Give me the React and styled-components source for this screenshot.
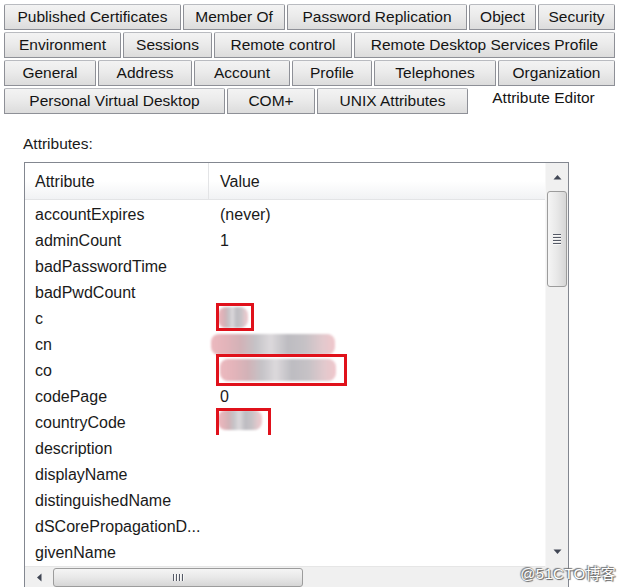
import React from 'react'
import styled, { createGlobalStyle } from 'styled-components'

// **** Styled Components : Start
const GlobalStyle = createGlobalStyle`
  html, body {
    margin: 0;
    padding: 0;
    background: #ffffff;
  }
  body {
    font-family: "Liberation Sans", Arial, sans-serif;
    color: #1a1a1a;
  }
`

const Page = styled.div`
  position: relative;
  width: 625px;
  height: 587px;
  overflow: hidden;
  background: #ffffff;
`

const TabStrip = styled.div`
  display: flex;
  flex-direction: column;
  gap: 2px;
  padding: 4px 0 0 4px;
`

const TabRow = styled.div`
  display: flex;
  gap: 2px;
  height: 26px;
  align-items: flex-end;
`

const Tab = styled.div`
  box-sizing: border-box;
  width: ${p => p.w}px;
  height: ${p => (p.selected ? 30 : 26)}px;
  margin-bottom: ${p => (p.selected ? -2 : 0)}px;
  display: flex;
  align-items: center;
  justify-content: center;
  padding-bottom: ${p => (p.selected ? 6 : 0)}px;
  font-size: 15.5px;
  white-space: nowrap;
  color: #141414;
  border: 1px solid ${p => (p.selected ? '#ffffff' : '#8e9097')};
  border-top-color: ${p => (p.selected ? '#ffffff' : '#b9bbc0')};
  border-radius: 2px 2px 0 0;
  background: ${p => (p.selected
    ? '#ffffff'
    : 'linear-gradient(#f3f3f3 0%, #ebebeb 45%, #dcdcdc 100%)')};
  position: relative;
  z-index: ${p => (p.selected ? 2 : 1)};
`

const Panel = styled.div`
  padding: 21px 0 0 23px;
`

const Label = styled.div`
  font-size: 15.5px;
  line-height: 18px;
  margin-bottom: 9px;
`

const ListBox = styled.div`
  box-sizing: border-box;
  width: 545px;
  height: 426px;
  margin-left: 1px;
  border: 1px solid #838790;
  display: grid;
  grid-template-columns: 1fr 23px;
  grid-template-rows: 1fr 21px;
  background: #ffffff;
`

const ListMain = styled.div`
  overflow: hidden;
`

const Header = styled.div`
  display: grid;
  grid-template-columns: 184px 1fr;
  height: 36px;
  border-bottom: 1px solid #e3e4e6;
  background: linear-gradient(#ffffff 0%, #ffffff 50%, #f1f2f4 100%);
`

const HeaderCell = styled.div`
  display: flex;
  align-items: center;
  padding-left: ${p => p.pad}px;
  padding-top: 2px;
  font-size: 16px;
  border-right: ${p => (p.divider ? '1px solid #e3e4e6' : 'none')};
`

const Rows = styled.div`
  padding-top: 2px;
`

const Row = styled.div`
  display: grid;
  grid-template-columns: 184px 1fr;
  height: 26px;
  font-size: 16px;
  line-height: 26px;
`

const NameCell = styled.div`
  padding-left: 10px;
  white-space: nowrap;
`

const ValueCell = styled.div`
  position: relative;
  padding-left: 11px;
  white-space: nowrap;
`

const Smudge = styled.div`
  position: absolute;
  left: ${p => p.x}px;
  top: ${p => p.y}px;
  width: ${p => p.w}px;
  height: ${p => p.h}px;
  border-radius: 8px;
  filter: blur(1px);
  background: linear-gradient(90deg,
    #ecb9bf 0%, #e3b4ba 12%, #d2b2b7 24%, #c5c3c7 36%, #dcd9dc 48%,
    #bdbcc1 62%, #c6c2c6 76%, #e2c9cd 90%, #f0c7cc 100%);
`

const RedFrame = styled.div`
  position: absolute;
  left: 7px;
  top: ${p => p.y}px;
  width: ${p => p.w}px;
  height: ${p => p.h}px;
  box-sizing: border-box;
  border: 3px solid #e0111b;
  border-bottom-width: ${p => (p.open ? 0 : 3)}px;
`

const VScroll = styled.div`
  position: relative;
  background: #f0f0f0;
  border-left: 1px solid #f7f7f7;
  display: flex;
  flex-direction: column;
  align-items: center;
`

const ArrowBox = styled.div`
  height: 28px;
  width: 100%;
  display: flex;
  align-items: center;
  justify-content: center;
`

const VThumb = styled.div`
  box-sizing: border-box;
  width: 20px;
  height: 96px;
  border: 1px solid #9c9c9c;
  border-radius: 3px;
  background: linear-gradient(90deg, #f5f5f5 0%, #e8e8e8 50%, #d6d6d6 100%);
  display: flex;
  flex-direction: column;
  align-items: center;
  justify-content: center;
  gap: 2px;
`

const Spacer = styled.div`
  flex: 1;
`

const GripH = styled.div`
  width: 8px;
  height: 1px;
  background: #555a66;
  box-shadow: 0 1px 0 #f8f8f8;
`

const HScroll = styled.div`
  background: #f0f0f0;
  border-top: 1px solid #e6e6e6;
  display: flex;
  align-items: center;
`

const HArrow = styled.div`
  width: 28px;
  height: 100%;
  display: flex;
  align-items: center;
  justify-content: center;
`

const HThumb = styled.div`
  box-sizing: border-box;
  width: 250px;
  height: 19px;
  border: 1px solid #9c9c9c;
  border-radius: 3px;
  background: linear-gradient(#f5f5f5 0%, #e8e8e8 50%, #d6d6d6 100%);
  display: flex;
  align-items: center;
  justify-content: center;
  gap: 2px;
`

const GripV = styled.div`
  width: 1px;
  height: 7px;
  background: #555a66;
  box-shadow: 1px 0 0 #f8f8f8;
`

const Corner = styled.div`
  background: #f0f0f0;
`

const Watermark = styled.div`
  position: absolute;
  right: 9px;
  bottom: 4px;
  font-family: "Liberation Sans", "Noto Sans CJK SC", sans-serif;
  font-size: 15px;
  color: #ffffff;
  text-shadow: 0 0 1px #555, 1px 1px 1px #666, -1px -1px 1px #777;
  letter-spacing: 0.3px;
`
// **** styled components : End

const tabRows = [
  [
    ['Published Certificates', 177],
    ['Member Of', 102],
    ['Password Replication', 180],
    ['Object', 67],
    ['Security', 77],
  ],
  [
    ['Environment', 117],
    ['Sessions', 89],
    ['Remote control', 138],
    ['Remote Desktop Services Profile', 261],
  ],
  [
    ['General', 92],
    ['Address', 94],
    ['Account', 96],
    ['Profile', 80],
    ['Telephones', 122],
    ['Organization', 117],
  ],
  [
    ['Personal Virtual Desktop', 221],
    ['COM+', 88],
    ['UNIX Attributes', 151],
    ['Attribute Editor', 147, true],
  ],
]

const attributes = [
  { name: 'accountExpires', value: '(never)' },
  { name: 'adminCount', value: '1' },
  { name: 'badPasswordTime' },
  { name: 'badPwdCount' },
  { name: 'c', smudge: { x: 9, y: 1, w: 30, h: 21 }, frame: { y: -3, w: 38, h: 28 } },
  { name: 'cn', smudge: { x: 2, y: 2, w: 124, h: 21 } },
  { name: 'co', smudge: { x: 11, y: 1, w: 116, h: 22 }, frame: { y: -4, w: 131, h: 32 } },
  { name: 'codePage', value: '0' },
  { name: 'countryCode', smudge: { x: 9, y: 0, w: 44, h: 20 }, frame: { y: -2, w: 55, h: 27, open: true } },
  { name: 'description' },
  { name: 'displayName' },
  { name: 'distinguishedName' },
  { name: 'dSCorePropagationD...' },
  { name: 'givenName' },
]

const UpArrow = () => (
  <svg width="9" height="6" viewBox="0 0 9 6">
    <path d="M0.5 5.5 L4.5 1 L8.5 5.5 Z" fill="#404654" />
  </svg>
)

const DownArrow = () => (
  <svg width="9" height="6" viewBox="0 0 9 6">
    <path d="M0.5 0.5 L4.5 5 L8.5 0.5 Z" fill="#404654" />
  </svg>
)

const LeftArrow = () => (
  <svg width="6" height="9" viewBox="0 0 6 9">
    <path d="M5.5 0.5 L1 4.5 L5.5 8.5 Z" fill="#404654" />
  </svg>
)

const App = () => {
  return (
    <>
      <GlobalStyle />
      <Page>
        <TabStrip>
          {tabRows.map((row, i) => (
            <TabRow key={i}>
              {row.map(([label, w, selected]) => (
                <Tab key={label} w={w} selected={selected}>{label}</Tab>
              ))}
            </TabRow>
          ))}
        </TabStrip>

        <Panel>
          <Label>Attributes:</Label>
          <ListBox>
            <ListMain>
              <Header>
                <HeaderCell pad={10} divider>Attribute</HeaderCell>
                <HeaderCell pad={11}>Value</HeaderCell>
              </Header>
              <Rows>
                {attributes.map(attr => (
                  <Row key={attr.name}>
                    <NameCell>{attr.name}</NameCell>
                    <ValueCell>
                      {attr.value}
                      {attr.smudge && <Smudge {...attr.smudge} />}
                      {attr.frame && <RedFrame {...attr.frame} />}
                    </ValueCell>
                  </Row>
                ))}
              </Rows>
            </ListMain>

            <VScroll>
              <ArrowBox><UpArrow /></ArrowBox>
              <VThumb>
                <GripH /><GripH /><GripH /><GripH />
              </VThumb>
              <Spacer />
              <ArrowBox><DownArrow /></ArrowBox>
            </VScroll>

            <HScroll>
              <HArrow><LeftArrow /></HArrow>
              <HThumb>
                <GripV /><GripV /><GripV /><GripV />
              </HThumb>
            </HScroll>
            <Corner />
          </ListBox>
        </Panel>

        <Watermark>@51CTO博客</Watermark>
      </Page>
    </>
  )
}

export default App
